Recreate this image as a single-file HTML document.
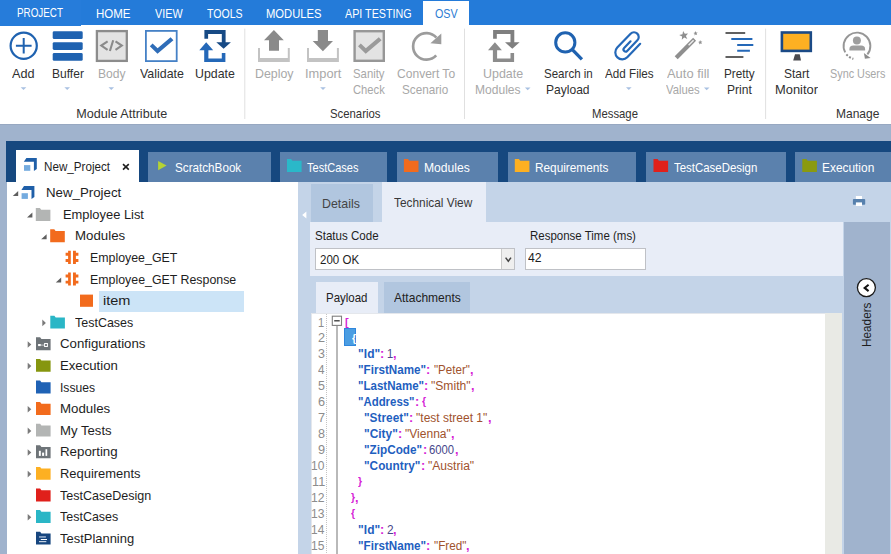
<!DOCTYPE html>
<html>
<head>
<meta charset="utf-8">
<title>OSV</title>
<style>
html,body{margin:0;padding:0;}
html{overflow:hidden;width:891px;height:554px;}
body{width:891px;height:554px;overflow:hidden;position:relative;background:#a0b3cd;font-family:"Liberation Sans",sans-serif;color:#1e1e1e;}
.a{position:absolute;}
.t{position:absolute;white-space:nowrap;line-height:20px;height:20px;transform-origin:0 0;font-kerning:normal;}
svg{position:absolute;overflow:visible;}
</style>
</head>
<body><div id="root" style="position:absolute;left:0;top:0;width:891px;height:554px;overflow:hidden;">
<!-- ===== menu bar ===== -->
<div class="a" style="left:0;top:0;width:891px;height:24.8px;background:#247bd9;"></div>
<div class="a" style="left:0;top:24.8px;width:891px;height:99.2px;background:#fff;"></div>
<div class="a" style="left:0;top:0;width:81px;height:25.6px;background:#267cda;"></div>
<div class="a" style="left:423px;top:1px;width:46px;height:25px;background:#fff;"></div>
<svg style="left:0;top:0" width="891" height="124" viewBox="0 0 891 124"><rect x="244.3" y="28.6" width="1" height="90.4" fill="#e0e0e0"/><rect x="464.0" y="28.6" width="1" height="90.4" fill="#e0e0e0"/><rect x="765.1" y="28.6" width="1" height="90.4" fill="#e0e0e0"/><circle cx="23.7" cy="45.8" r="13.1" fill="none" stroke="#1f62b0" stroke-width="2.2"/><path d="M15.9 45.8H31.6M23.7 38V53.6" stroke="#1f62b0" stroke-width="2" fill="none"/><rect x="52.7" y="31.3" width="30" height="7.8" rx="1.4" fill="#1f62b0"/><rect x="52.7" y="42.2" width="30" height="7.8" rx="1.4" fill="#1f62b0"/><rect x="52.7" y="53.0" width="30" height="7.8" rx="1.4" fill="#1f62b0"/><rect x="96.9" y="31.1" width="29.9" height="29.8" fill="#e3e3e3" stroke="#8c8c8c" stroke-width="2.3"/><path d="M107.6 41.4L101.3 45.6L107.6 49.8M109.9 51L113.2 40.2M115.5 41.4L121.8 45.6L115.5 49.8" fill="none" stroke="#8a8a8a" stroke-width="2.1"/><rect x="145.9" y="30.9" width="30.8" height="30.2" fill="#fff" stroke="#4581c6" stroke-width="1.8"/><path d="M149.8 46.2L152.6 43.4L157.6 48.3L170.6 37.2L173.4 40.3L157.5 53.8Z" fill="#2f6db8"/><g transform="translate(0,0)">
<path d="M204.4 30H225.6V42.2H230.9L223.6 48.8L216.3 42.2H221.8V34H208.1V38.8H204.4Z" fill="#174a85"/>
<path d="M206.2 42.2L213.2 50.3H208.4V58.4H221.8V53H225.4V62H204.2V50.3H199.3Z" fill="#2468b8"/>
</g><path d="M258 48.1H260V58H287.8V48.1H289.8V62H258Z" fill="#c3c3c3"/><path d="M273.9 30L283.8 40.3H279V50.8H269V40.3H264Z" fill="#8a8a8a"/><path d="M307 48.1H309V58H336.9V48.1H338.9V62H307Z" fill="#c3c3c3"/><path d="M317.8 30H328V40.9H333L322.9 51.2L312.7 40.9H317.8Z" fill="#8a8a8a"/><rect x="354.6" y="31.2" width="29.2" height="29.6" fill="#e3e3e3" stroke="#979797" stroke-width="2.4"/><path d="M358 46.2L360.8 43.4L365.8 48.3L378.8 37.2L381.6 40.3L365.7 53.8Z" fill="#9a9a9a"/><path d="M436.2 55.4A13.3 13.3 0 1 1 436.4 37.6" fill="none" stroke="#9c9c9c" stroke-width="2.7"/><path d="M441.3 33.6V44.2L430.4 43.3Z" fill="#9c9c9c"/><g transform="translate(288.7,0)">
<path d="M204.4 30H225.6V42.2H230.9L223.6 48.8L216.3 42.2H221.8V34H208.1V38.8H204.4Z" fill="#7f7f7f"/>
<path d="M206.2 42.2L213.2 50.3H208.4V58.4H221.8V53H225.4V62H204.2V50.3H199.3Z" fill="#8c8c8c"/>
</g><circle cx="565.3" cy="42.4" r="9.6" fill="none" stroke="#1f62b0" stroke-width="3"/><path d="M572.6 49.9L581.9 59.3" stroke="#1f62b0" stroke-width="3.3" fill="none"/><g transform="translate(628.3,46.1) rotate(44)" fill="none" stroke="#2468b8" stroke-width="2.2" stroke-linecap="round"><path d="M6.95 -9.9V8.7A6.95 6.95 0 0 1 -6.95 8.7V-10.5A4.725 4.725 0 0 1 2.5 -10.5V4.25A2.1 2.1 0 0 1 -1.7 4.25V-5"/></g><path d="M676.2 57.7L694.6 39.2" stroke="#8f8f8f" stroke-width="4.2" fill="none"/><path d="M688.6 45.2L693.6 40.2" stroke="#ededed" stroke-width="1.5" fill="none"/><path d="M683.1 31.0L684.8 33.8L688.0 33.4L685.9 35.9L687.3 38.9L684.2 37.6L681.8 39.8L682.1 36.5L679.2 34.9L682.5 34.2Z" fill="#8f8f8f"/><path d="M695.4 31.1L696.1 32.5L697.7 32.5L696.6 33.6L697.1 35.1L695.7 34.4L694.4 35.4L694.7 33.8L693.4 32.9L694.9 32.6Z" fill="#8f8f8f"/><path d="M700.1 40.1L700.8 41.5L702.4 41.5L701.3 42.6L701.8 44.1L700.4 43.4L699.1 44.4L699.4 42.8L698.1 41.9L699.6 41.6Z" fill="#8f8f8f"/><path d="M725.5 33H745.2M725.5 57H743.4" stroke="#616161" stroke-width="2.2" fill="none"/><path d="M731.3 38.9H752.4M737.2 44.9H753.3M737.2 50.8H749.9" stroke="#2468b8" stroke-width="2" fill="none"/><rect x="781.9" y="32.5" width="28.9" height="18.4" fill="#fdb022" stroke="#1b4a86" stroke-width="2.6"/><path d="M795 54.3H799.7L801 60.6H793.2Z" fill="#4a4a4f"/><path d="M845.2 52.4A13.4 13.4 0 1 1 867.4 54.4" fill="none" stroke="#969696" stroke-width="1.9"/><path d="M846.4 54.4A13.4 13.4 0 0 0 853.4 58.7" stroke="#8c8c8c" stroke-width="2.1" stroke-dasharray="2 1.6" fill="none"/><path d="M863.9 53L870.6 58L864.9 58.8Z" fill="#8c8c8c"/><circle cx="856.9" cy="40.4" r="4" fill="#9e9e9e"/><path d="M849.4 50.4V49.2Q849.4 45.6 853.4 45.6H861.1Q865.1 45.6 865.1 49.2V50.4Z" fill="#9e9e9e"/><path d="M20.7 87.3H26.3L23.5 90.1Z" fill="#a9c1e2"/><path d="M64.4 87.3H70.0L67.2 90.1Z" fill="#a9c1e2"/><path d="M108.5 87.3H114.1L111.3 90.1Z" fill="#a9c1e2"/><path d="M320.2 87.3H325.8L323 90.1Z" fill="#a9c1e2"/><path d="M626.0 87.3H631.5999999999999L628.8 90.1Z" fill="#a9c1e2"/><path d="M524.9000000000001 87.4H530.5L527.7 90.2Z" fill="#a9c1e2"/><path d="M703.9000000000001 87.4H709.5L706.7 90.2Z" fill="#a9c1e2"/></svg><div class="a" style="left:0;top:124px;width:891px;height:1px;background:#97a8c1;"></div>
<!-- ===== document tabs ===== -->
<div class="a" style="left:6.3px;top:140.9px;width:885px;height:41px;background:#16487f;"></div>
<div class="a" style="left:16.1px;top:150.1px;width:123.1px;height:33px;background:#fff;"></div><div class="a" style="left:148.1px;top:151.8px;width:122.5px;height:30px;background:#5b81ad;"></div><div class="a" style="left:280.3px;top:151.8px;width:106.3px;height:30px;background:#5b81ad;"></div><div class="a" style="left:396.9px;top:151.8px;width:101.3px;height:30px;background:#5b81ad;"></div><div class="a" style="left:507.8px;top:151.8px;width:128.5px;height:30px;background:#5b81ad;"></div><div class="a" style="left:645.6px;top:151.8px;width:140.1px;height:30px;background:#5b81ad;"></div><div class="a" style="left:795px;top:151.8px;width:96.0px;height:30px;background:#5b81ad;"></div><svg style="left:0;top:0" width="891" height="190" viewBox="0 0 891 190"><g transform="translate(23.8,158) scale(1.0)"><path d="M2.6 0H13V11L10.1 13V3.8H0Z" fill="#1f5fa8"/><rect x="0.2" y="7.1" width="6.3" height="5.7" fill="#74abdf"/></g><path d="M123 164.2L128.8 169.6M128.8 164.2L123 169.6" stroke="#1e1e1e" stroke-width="1.6" fill="none"/><path d="M158.1 160.9L166.6 165.5L158.1 170.2Z" fill="#b5d334"/><path d="M287 159.1H291.1L292.4 160.79999999999998H301.6V172.0H287Z" fill="#2ab8c9"/><path d="M403.9 159.1H408.0L409.29999999999995 160.79999999999998H418.5V172.0H403.9Z" fill="#f26b1d"/><path d="M514.8 159.1H518.9L520.1999999999999 160.79999999999998H529.4V172.0H514.8Z" fill="#fdb022"/><path d="M653.5 159.1H657.6L658.9 160.79999999999998H668.1V172.0H653.5Z" fill="#e0201b"/><path d="M802.3 159.1H806.4L807.6999999999999 160.79999999999998H816.9V172.0H802.3Z" fill="#8a9a10"/></svg>
<!-- ===== tree ===== -->
<div class="a" style="left:7.1px;top:181.8px;width:291.2px;height:373px;background:#fff;"></div>
<div class="a" style="left:99px;top:290.6px;width:144.9px;height:21px;background:#cce4f7;"></div><svg style="left:0;top:0" width="300" height="554" viewBox="0 0 300 554"><path d="M18.2 191.0V196.0H12.799999999999999Z" fill="#5e5e5e"/><g transform="translate(21.4,186.1) scale(1.0)"><path d="M2.6 0H13V11L10.1 13V3.8H0Z" fill="#1f5fa8"/><rect x="0.2" y="7.1" width="6.3" height="5.7" fill="#74abdf"/></g><path d="M32.4 212.6V217.6H27.0Z" fill="#5e5e5e"/><path d="M35.8 208.0H39.9L41.199999999999996 209.7H50.4V220.9H35.8Z" fill="#b3b5b4"/><path d="M46.6 234.2V239.2H41.2Z" fill="#5e5e5e"/><path d="M50.2 229.29999999999998H54.300000000000004L55.6 230.99999999999997H64.8V242.2H50.2Z" fill="#f26b1d"/><path d="M68.1 250.8H70.8V264.0H68.1V262.0H65.6V259.1H68.1V255.8H65.6V252.8H68.1ZM75.89999999999999 250.8H73.0V264.0H75.89999999999999V262.0H78.39999999999999V259.1H75.89999999999999V255.8H78.39999999999999V252.8H75.89999999999999Z" fill="#f26b1d"/><path d="M61.2 277.4V282.4H55.800000000000004Z" fill="#5e5e5e"/><path d="M68.1 272.4H70.8V285.59999999999997H68.1V283.59999999999997H65.6V280.7H68.1V277.4H65.6V274.4H68.1ZM75.89999999999999 272.4H73.0V285.59999999999997H75.89999999999999V283.59999999999997H78.39999999999999V280.7H75.89999999999999V277.4H78.39999999999999V274.4H75.89999999999999Z" fill="#f26b1d"/><rect x="80" y="294.6" width="13" height="12.2" fill="#f26b1d"/><path d="M42.300000000000004 319.6L45.900000000000006 322.90000000000003L42.300000000000004 326.20000000000005Z" fill="#7a7a7a"/><path d="M50.3 315.70000000000005H54.4L55.699999999999996 317.40000000000003H64.89999999999999V328.6H50.3Z" fill="#2ab6c6"/><path d="M27.700000000000003 341.20000000000005L31.3 344.50000000000006L27.700000000000003 347.80000000000007Z" fill="#7a7a7a"/><path d="M36 337.30000000000007H40.1L41.4 339.00000000000006H50.6V350.20000000000005H36Z" fill="#6e7478"/><path d="M27.700000000000003 362.8L31.3 366.1L27.700000000000003 369.40000000000003Z" fill="#7a7a7a"/><path d="M36 358.90000000000003H40.1L41.4 360.6H50.6V371.8H36Z" fill="#86960f"/><path d="M36 380.5H40.1L41.4 382.2H50.6V393.4H36Z" fill="#1f62b5"/><path d="M27.700000000000003 406.0L31.3 409.3L27.700000000000003 412.6Z" fill="#7a7a7a"/><path d="M36 402.1H40.1L41.4 403.8H50.6V415.0H36Z" fill="#f26b1d"/><path d="M27.700000000000003 427.6L31.3 430.90000000000003L27.700000000000003 434.20000000000005Z" fill="#7a7a7a"/><path d="M36 423.70000000000005H40.1L41.4 425.40000000000003H50.6V436.6H36Z" fill="#b3b5b4"/><path d="M27.700000000000003 449.20000000000005L31.3 452.50000000000006L27.700000000000003 455.80000000000007Z" fill="#7a7a7a"/><path d="M36 445.30000000000007H40.1L41.4 447.00000000000006H50.6V458.20000000000005H36Z" fill="#6e7478"/><path d="M27.700000000000003 470.8L31.3 474.1L27.700000000000003 477.40000000000003Z" fill="#7a7a7a"/><path d="M36 466.90000000000003H40.1L41.4 468.6H50.6V479.8H36Z" fill="#fdb022"/><path d="M36 488.50000000000006H40.1L41.4 490.20000000000005H50.6V501.40000000000003H36Z" fill="#e0201b"/><path d="M27.700000000000003 514.0L31.3 517.3L27.700000000000003 520.6Z" fill="#7a7a7a"/><path d="M36 510.1H40.1L41.4 511.8H50.6V523.0H36Z" fill="#2ab6c6"/><path d="M36 531.7H40.1L41.4 533.4000000000001H50.6V544.6H36Z" fill="#17467f"/><rect x="38.1" y="344.00000000000006" width="2.7" height="2.1" fill="#fff"/><rect x="40.8" y="344.6" width="3.3" height="1" fill="#c9cacc"/><rect x="44.6" y="343.50000000000006" width="2.8" height="3" fill="none" stroke="#fff" stroke-width="1"/><rect x="38.9" y="450.80000000000007" width="1.9" height="5.1" fill="#fff"/><rect x="42.1" y="452.6" width="2" height="3.3" fill="#fff"/><rect x="45.5" y="449.20000000000005" width="1.7" height="6.7" fill="#fff"/><rect x="39" y="536.2" width="6.9" height="1.5" fill="#9db3d0"/><rect x="40.8" y="539.0" width="6.2" height="1" fill="#fff"/><rect x="39" y="541.1" width="7.3" height="1.1" fill="#d5deea"/></svg>
<!-- ===== right panel ===== -->
<div class="a" style="left:298.3px;top:181.8px;width:594px;height:373px;background:#c4d4e8;"></div>
<div class="a" style="left:310.8px;top:184px;width:62.1px;height:38px;background:#b1c6df;"></div><div class="a" style="left:381.8px;top:182.2px;width:103.9px;height:39.9px;background:#e8edf7;"></div><div class="a" style="left:309.8px;top:222px;width:533.7px;height:54px;background:#e8edf7;"></div><div class="a" style="left:843.5px;top:222.2px;width:46.3px;height:332px;background:#a0b3cd;"></div><div class="a" style="left:315.4px;top:248.4px;width:199.2px;height:21.8px;background:#fff;box-sizing:border-box;border:1px solid #bfc1c6;"></div><div class="a" style="left:501.2px;top:249.4px;width:12.4px;height:19.8px;background:#efefef;border-left:1px solid #cbcbcb;box-sizing:border-box;"></div><div class="a" style="left:525.3px;top:248.4px;width:120.4px;height:21.8px;background:#fff;box-sizing:border-box;border:1px solid #bfc1c6;"></div><div class="a" style="left:316px;top:282.4px;width:61.8px;height:30.9px;background:#e8edf7;"></div><div class="a" style="left:383.8px;top:282.4px;width:86.6px;height:30.9px;background:#b1c6df;"></div><div class="a" style="left:310.5px;top:313.2px;width:514.7px;height:242px;background:#fff;box-sizing:border-box;border-top:1px solid #e4e7ec;border-left:1px solid #e4e7ec;"></div><div class="a" style="left:825.2px;top:313.2px;width:16.6px;height:242px;background:#e9eae5;"></div><div class="a" style="left:344.3px;top:328.3px;width:11.5px;height:17.6px;background:#4b9de2;box-sizing:border-box;border:1px solid #2f86dc;"></div><svg style="left:0;top:0" width="891" height="554" viewBox="0 0 891 554"><path d="M306.4 211.4V218.6L302.2 215Z" fill="#fff"/><path d="M505.6 257.6L508.3 261.2L511 257.6" fill="none" stroke="#444" stroke-width="1.5"/><rect x="852.9" y="199" width="12.3" height="5.7" rx="0.8" fill="#5680ad"/><rect x="855.9" y="196" width="6.1" height="3" fill="#fff"/><rect x="855.9" y="202.4" width="6.1" height="3.6" fill="#fff"/><circle cx="866.4" cy="287.6" r="9" fill="#fff" stroke="#1a1a1a" stroke-width="1.3"/><path d="M868.6 284.7L864.6 287.9L868.6 291.1" fill="none" stroke="#111" stroke-width="2"/><path d="M326.5 314V554" stroke="#c4c4c4" stroke-width="1" stroke-dasharray="1 1" fill="none"/><path d="M337 326V554" stroke="#8a8a8a" stroke-width="1.2" fill="none"/><rect x="332.3" y="316.2" width="9.2" height="9.2" fill="#fff" stroke="#7f7f7f" stroke-width="1.1"/><path d="M334.2 320.8H339.7" stroke="#333" stroke-width="1.3"/></svg>
<span class="t" style="left:16.59px;top:3.00px;font-size:12.6px;color:#fff;transform:scaleX(0.7815);">PROJECT</span>
<span class="t" style="left:95.86px;top:4.20px;font-size:12.6px;color:#fff;transform:scaleX(0.9142);">HOME</span>
<span class="t" style="left:154.85px;top:4.20px;font-size:12.6px;color:#fff;transform:scaleX(0.8570);">VIEW</span>
<span class="t" style="left:206.76px;top:4.20px;font-size:12.6px;color:#fff;transform:scaleX(0.8390);">TOOLS</span>
<span class="t" style="left:265.78px;top:4.20px;font-size:12.6px;color:#fff;transform:scaleX(0.8917);">MODULES</span>
<span class="t" style="left:345.18px;top:4.20px;font-size:12.6px;color:#fff;transform:scaleX(0.8526);">API TESTING</span>
<span class="t" style="left:435.09px;top:4.00px;font-size:12.6px;color:#2b7cd3;transform:scaleX(0.8518);">OSV</span>
<span class="t" style="left:11.88px;top:63.60px;font-size:12.6px;color:#303030;transform:scaleX(1.0060);">Add</span>
<span class="t" style="left:52.41px;top:63.60px;font-size:12.6px;color:#303030;transform:scaleX(0.9555);">Buffer</span>
<span class="t" style="left:97.71px;top:63.60px;font-size:12.6px;color:#a8a8a8;transform:scaleX(0.9585);">Body</span>
<span class="t" style="left:139.75px;top:63.60px;font-size:12.6px;color:#303030;transform:scaleX(0.9850);">Validate</span>
<span class="t" style="left:195.25px;top:63.60px;font-size:12.6px;color:#303030;transform:scaleX(0.9801);">Update</span>
<span class="t" style="left:255.48px;top:63.60px;font-size:12.6px;color:#a8a8a8;transform:scaleX(0.9831);">Deploy</span>
<span class="t" style="left:305.11px;top:63.60px;font-size:12.6px;color:#a8a8a8;transform:scaleX(1.0193);">Import</span>
<span class="t" style="left:353.08px;top:63.60px;font-size:12.6px;color:#a8a8a8;transform:scaleX(0.9010);">Sanity</span>
<span class="t" style="left:353.23px;top:79.60px;font-size:12.6px;color:#a8a8a8;transform:scaleX(0.8895);">Check</span>
<span class="t" style="left:396.69px;top:63.60px;font-size:12.6px;color:#a8a8a8;transform:scaleX(0.9577);">Convert To</span>
<span class="t" style="left:402.47px;top:79.60px;font-size:12.6px;color:#a8a8a8;transform:scaleX(0.9300);">Scenario</span>
<span class="t" style="left:483.04px;top:63.60px;font-size:12.6px;color:#a8a8a8;transform:scaleX(0.9878);">Update</span>
<span class="t" style="left:475.31px;top:79.60px;font-size:12.6px;color:#a8a8a8;transform:scaleX(0.9564);">Modules</span>
<span class="t" style="left:544.28px;top:63.60px;font-size:12.6px;color:#303030;transform:scaleX(0.9168);">Search in</span>
<span class="t" style="left:546.21px;top:79.60px;font-size:12.6px;color:#303030;transform:scaleX(0.9573);">Payload</span>
<span class="t" style="left:604.98px;top:63.60px;font-size:12.6px;color:#303030;transform:scaleX(0.9266);">Add Files</span>
<span class="t" style="left:667.17px;top:63.60px;font-size:12.6px;color:#a8a8a8;transform:scaleX(1.0264);">Auto fill</span>
<span class="t" style="left:665.85px;top:79.60px;font-size:12.6px;color:#a8a8a8;transform:scaleX(0.8958);">Values</span>
<span class="t" style="left:724.04px;top:63.60px;font-size:12.6px;color:#303030;transform:scaleX(0.9330);">Pretty</span>
<span class="t" style="left:727.01px;top:79.60px;font-size:12.6px;color:#303030;transform:scaleX(0.9568);">Print</span>
<span class="t" style="left:783.85px;top:63.60px;font-size:12.6px;color:#303030;transform:scaleX(0.9525);">Start</span>
<span class="t" style="left:775.34px;top:79.60px;font-size:12.6px;color:#303030;transform:scaleX(1.0233);">Monitor</span>
<span class="t" style="left:829.91px;top:63.60px;font-size:12.6px;color:#a8a8a8;transform:scaleX(0.8602);">Sync Users</span>
<span class="t" style="left:76.17px;top:103.50px;font-size:12.6px;color:#333;">Module Attribute</span>
<span class="t" style="left:329.88px;top:103.50px;font-size:12.6px;color:#333;transform:scaleX(0.9004);">Scenarios</span>
<span class="t" style="left:592.37px;top:103.50px;font-size:12.6px;color:#333;transform:scaleX(0.8989);">Message</span>
<span class="t" style="left:836.21px;top:103.50px;font-size:12.6px;color:#333;transform:scaleX(0.9541);">Manage</span>
<span class="t" style="left:43.54px;top:156.50px;font-size:12.7px;color:#1e1e1e;transform:scaleX(0.9182);">New_Project</span>
<span class="t" style="left:174.67px;top:157.50px;font-size:12.7px;color:#fff;transform:scaleX(0.9205);">ScratchBook</span>
<span class="t" style="left:307.15px;top:157.50px;font-size:12.7px;color:#fff;transform:scaleX(0.8686);">TestCases</span>
<span class="t" style="left:424.40px;top:157.50px;font-size:12.7px;color:#fff;transform:scaleX(0.9558);">Modules</span>
<span class="t" style="left:534.53px;top:157.50px;font-size:12.7px;color:#fff;transform:scaleX(0.9306);">Requirements</span>
<span class="t" style="left:673.94px;top:157.50px;font-size:12.7px;color:#fff;transform:scaleX(0.9017);">TestCaseDesign</span>
<span class="t" style="left:821.72px;top:157.50px;font-size:12.7px;color:#fff;transform:scaleX(0.9378);">Execution</span>
<span class="t" style="left:46.01px;top:183.10px;font-size:12.8px;color:#1e1e1e;transform:scaleX(1.0378);">New_Project</span>
<span class="t" style="left:62.54px;top:204.70px;font-size:12.8px;color:#1e1e1e;transform:scaleX(1.0072);">Employee List</span>
<span class="t" style="left:75.01px;top:226.30px;font-size:12.8px;color:#1e1e1e;transform:scaleX(1.0372);">Modules</span>
<span class="t" style="left:89.59px;top:247.90px;font-size:12.8px;color:#1e1e1e;transform:scaleX(0.9665);">Employee_GET</span>
<span class="t" style="left:89.58px;top:269.50px;font-size:12.8px;color:#1e1e1e;transform:scaleX(0.9667);">Employee_GET Response</span>
<span class="t" style="left:102.53px;top:291.10px;font-size:12.8px;color:#1e1e1e;transform:scaleX(1.1346);">item</span>
<span class="t" style="left:74.82px;top:312.70px;font-size:12.8px;color:#1e1e1e;transform:scaleX(0.9747);">TestCases</span>
<span class="t" style="left:59.73px;top:334.30px;font-size:12.8px;color:#1e1e1e;transform:scaleX(1.0356);">Configurations</span>
<span class="t" style="left:60.32px;top:355.90px;font-size:12.8px;color:#1e1e1e;transform:scaleX(1.0291);">Execution</span>
<span class="t" style="left:60.28px;top:377.50px;font-size:12.8px;color:#1e1e1e;transform:scaleX(0.9479);">Issues</span>
<span class="t" style="left:60.21px;top:399.10px;font-size:12.8px;color:#1e1e1e;transform:scaleX(1.0393);">Modules</span>
<span class="t" style="left:60.22px;top:420.70px;font-size:12.8px;color:#1e1e1e;transform:scaleX(1.0272);">My Tests</span>
<span class="t" style="left:60.21px;top:442.30px;font-size:12.8px;color:#1e1e1e;transform:scaleX(1.0390);">Reporting</span>
<span class="t" style="left:60.24px;top:463.90px;font-size:12.8px;color:#1e1e1e;transform:scaleX(1.0109);">Requirements</span>
<span class="t" style="left:60.42px;top:485.50px;font-size:12.8px;color:#1e1e1e;transform:scaleX(0.9798);">TestCaseDesign</span>
<span class="t" style="left:60.42px;top:507.10px;font-size:12.8px;color:#1e1e1e;transform:scaleX(0.9747);">TestCases</span>
<span class="t" style="left:60.41px;top:528.70px;font-size:12.8px;color:#1e1e1e;transform:scaleX(1.0116);">TestPlanning</span>
<span class="t" style="left:321.88px;top:193.50px;font-size:12.6px;color:#444;transform:scaleX(0.9836);">Details</span>
<span class="t" style="left:393.63px;top:193.20px;font-size:12.6px;color:#383838;transform:scaleX(0.9418);">Technical View</span>
<span class="t" style="left:315.07px;top:225.50px;font-size:12.6px;color:#1e1e1e;transform:scaleX(0.9182);">Status Code</span>
<span class="t" style="left:530.06px;top:225.80px;font-size:12.6px;color:#1e1e1e;transform:scaleX(0.9120);">Response Time (ms)</span>
<span class="t" style="left:320.02px;top:249.50px;font-size:12.6px;color:#1e1e1e;transform:scaleX(0.9158);">200 OK</span>
<span class="t" style="left:528.22px;top:247.80px;font-size:12.6px;color:#1e1e1e;transform:scaleX(0.9706);">42</span>
<span class="t" style="left:325.76px;top:288.30px;font-size:12.6px;color:#222;transform:scaleX(0.9115);">Payload</span>
<span class="t" style="left:393.88px;top:288.30px;font-size:12.6px;color:#222;transform:scaleX(0.9552);">Attachments</span>
<span class="t" style="left:857.20px;top:346.57px;font-size:12.6px;color:#1e1e1e;transform:rotate(-90deg) scaleX(0.9347);">Headers</span>
<span class="t" style="left:317.54px;top:312.50px;font-size:12px;color:#8c8c8c;transform:scaleX(0.9300);">1</span>
<span class="t" style="left:317.91px;top:328.43px;font-size:12px;color:#8c8c8c;transform:scaleX(1.0600);">2</span>
<span class="t" style="left:318.03px;top:344.36px;font-size:12px;color:#8c8c8c;transform:scaleX(1.0370);">3</span>
<span class="t" style="left:318.23px;top:360.29px;font-size:12px;color:#8c8c8c;transform:scaleX(0.9757);">4</span>
<span class="t" style="left:318.00px;top:376.22px;font-size:12px;color:#8c8c8c;transform:scaleX(1.0370);">5</span>
<span class="t" style="left:317.87px;top:392.15px;font-size:12px;color:#8c8c8c;transform:scaleX(1.0600);">6</span>
<span class="t" style="left:317.91px;top:408.08px;font-size:12px;color:#8c8c8c;transform:scaleX(1.0600);">7</span>
<span class="t" style="left:317.95px;top:424.01px;font-size:12px;color:#8c8c8c;transform:scaleX(1.0478);">8</span>
<span class="t" style="left:317.92px;top:439.94px;font-size:12px;color:#8c8c8c;transform:scaleX(1.0600);">9</span>
<span class="t" style="left:311.48px;top:455.87px;font-size:12px;color:#8c8c8c;transform:scaleX(1.0029);">10</span>
<span class="t" style="left:311.62px;top:471.80px;font-size:12px;color:#8c8c8c;transform:scaleX(1.0600);">11</span>
<span class="t" style="left:311.47px;top:487.73px;font-size:12px;color:#8c8c8c;transform:scaleX(1.0144);">12</span>
<span class="t" style="left:311.48px;top:503.66px;font-size:12px;color:#8c8c8c;transform:scaleX(1.0079);">13</span>
<span class="t" style="left:311.49px;top:519.59px;font-size:12px;color:#8c8c8c;transform:scaleX(0.9932);">14</span>
<span class="t" style="left:311.48px;top:535.52px;font-size:12px;color:#8c8c8c;transform:scaleX(1.0059);">15</span>
<span class="t" style="left:344.98px;top:311.50px;font-size:11.2px;color:#d61fd6;font-weight:bold;transform:scaleX(0.9798);">[</span>
<span class="t" style="left:351.51px;top:327.63px;font-size:11.4px;color:#fff;font-weight:bold;transform:scaleX(0.9300);">{</span>
<span class="t" style="left:358.11px;top:344.36px;font-size:12px;color:#1f5fbf;font-weight:bold;">"Id"</span>
<span class="t" style="left:380.38px;top:344.36px;font-size:12px;color:#d61fd6;font-weight:bold;transform:scaleX(1.0600);">:</span>
<span class="t" style="left:386.74px;top:344.36px;font-size:12px;color:#47478a;transform:scaleX(0.9300);">1</span>
<span class="t" style="left:393.13px;top:344.36px;font-size:12px;color:#d61fd6;font-weight:bold;transform:scaleX(1.0600);">,</span>
<span class="t" style="left:358.13px;top:360.29px;font-size:12px;color:#1f5fbf;font-weight:bold;transform:scaleX(0.9710);">"FirstName"</span>
<span class="t" style="left:426.48px;top:360.29px;font-size:12px;color:#d61fd6;font-weight:bold;transform:scaleX(1.0600);">:</span>
<span class="t" style="left:433.51px;top:360.29px;font-size:12px;color:#a0522d;transform:scaleX(0.9646);">"Peter"</span>
<span class="t" style="left:469.73px;top:360.29px;font-size:12px;color:#d61fd6;font-weight:bold;transform:scaleX(1.0600);">,</span>
<span class="t" style="left:358.14px;top:376.22px;font-size:12px;color:#1f5fbf;font-weight:bold;transform:scaleX(0.9605);">"LastName"</span>
<span class="t" style="left:424.48px;top:376.22px;font-size:12px;color:#d61fd6;font-weight:bold;transform:scaleX(1.0600);">:</span>
<span class="t" style="left:431.49px;top:376.22px;font-size:12px;color:#a0522d;transform:scaleX(1.0085);">"Smith"</span>
<span class="t" style="left:471.33px;top:376.22px;font-size:12px;color:#d61fd6;font-weight:bold;transform:scaleX(1.0600);">,</span>
<span class="t" style="left:358.15px;top:392.15px;font-size:12px;color:#1f5fbf;font-weight:bold;transform:scaleX(0.9513);">"Address"</span>
<span class="t" style="left:414.78px;top:392.15px;font-size:12px;color:#d61fd6;font-weight:bold;transform:scaleX(1.0600);">:</span>
<span class="t" style="left:422.23px;top:391.15px;font-size:11.2px;color:#d61fd6;font-weight:bold;transform:scaleX(0.9395);">{</span>
<span class="t" style="left:364.42px;top:408.08px;font-size:12px;color:#1f5fbf;font-weight:bold;transform:scaleX(0.9861);">"Street"</span>
<span class="t" style="left:409.28px;top:408.08px;font-size:12px;color:#d61fd6;font-weight:bold;transform:scaleX(1.0600);">:</span>
<span class="t" style="left:416.09px;top:408.08px;font-size:12px;color:#a0522d;">"test street 1"</span>
<span class="t" style="left:487.53px;top:408.08px;font-size:12px;color:#d61fd6;font-weight:bold;transform:scaleX(1.0600);">,</span>
<span class="t" style="left:364.42px;top:424.01px;font-size:12px;color:#1f5fbf;font-weight:bold;transform:scaleX(0.9918);">"City"</span>
<span class="t" style="left:398.28px;top:424.01px;font-size:12px;color:#d61fd6;font-weight:bold;transform:scaleX(1.0600);">:</span>
<span class="t" style="left:404.79px;top:424.01px;font-size:12px;color:#a0522d;transform:scaleX(1.0034);">"Vienna"</span>
<span class="t" style="left:450.73px;top:424.01px;font-size:12px;color:#d61fd6;font-weight:bold;transform:scaleX(1.0600);">,</span>
<span class="t" style="left:364.43px;top:439.94px;font-size:12px;color:#1f5fbf;font-weight:bold;transform:scaleX(0.9794);">"ZipCode"</span>
<span class="t" style="left:422.58px;top:439.94px;font-size:12px;color:#d61fd6;font-weight:bold;transform:scaleX(1.0600);">:</span>
<span class="t" style="left:429.03px;top:439.94px;font-size:12px;color:#47478a;transform:scaleX(0.9408);">6000</span>
<span class="t" style="left:454.53px;top:439.94px;font-size:12px;color:#d61fd6;font-weight:bold;transform:scaleX(1.0600);">,</span>
<span class="t" style="left:364.42px;top:455.87px;font-size:12px;color:#1f5fbf;font-weight:bold;transform:scaleX(0.9840);">"Country"</span>
<span class="t" style="left:420.98px;top:455.87px;font-size:12px;color:#d61fd6;font-weight:bold;transform:scaleX(1.0600);">:</span>
<span class="t" style="left:428.29px;top:455.87px;font-size:12px;color:#a0522d;transform:scaleX(1.0056);">"Austria"</span>
<span class="t" style="left:357.80px;top:470.80px;font-size:11.2px;color:#d61fd6;font-weight:bold;transform:scaleX(0.9300);">}</span>
<span class="t" style="left:351.30px;top:486.73px;font-size:11.2px;color:#d61fd6;font-weight:bold;transform:scaleX(0.9300);">}</span>
<span class="t" style="left:355.33px;top:487.73px;font-size:12px;color:#d61fd6;font-weight:bold;transform:scaleX(1.0600);">,</span>
<span class="t" style="left:350.73px;top:502.66px;font-size:11.2px;color:#d61fd6;font-weight:bold;transform:scaleX(0.9395);">{</span>
<span class="t" style="left:358.11px;top:519.59px;font-size:12px;color:#1f5fbf;font-weight:bold;">"Id"</span>
<span class="t" style="left:380.38px;top:519.59px;font-size:12px;color:#d61fd6;font-weight:bold;transform:scaleX(1.0600);">:</span>
<span class="t" style="left:387.00px;top:519.59px;font-size:12px;color:#47478a;transform:scaleX(0.9878);">2</span>
<span class="t" style="left:393.13px;top:519.59px;font-size:12px;color:#d61fd6;font-weight:bold;transform:scaleX(1.0600);">,</span>
<span class="t" style="left:358.13px;top:535.52px;font-size:12px;color:#1f5fbf;font-weight:bold;transform:scaleX(0.9710);">"FirstName"</span>
<span class="t" style="left:426.48px;top:535.52px;font-size:12px;color:#d61fd6;font-weight:bold;transform:scaleX(1.0600);">:</span>
<span class="t" style="left:433.80px;top:535.52px;font-size:12px;color:#a0522d;transform:scaleX(0.9759);">"Fred"</span>
<span class="t" style="left:466.33px;top:535.52px;font-size:12px;color:#d61fd6;font-weight:bold;transform:scaleX(1.0600);">,</span>
</div></body>
</html>
